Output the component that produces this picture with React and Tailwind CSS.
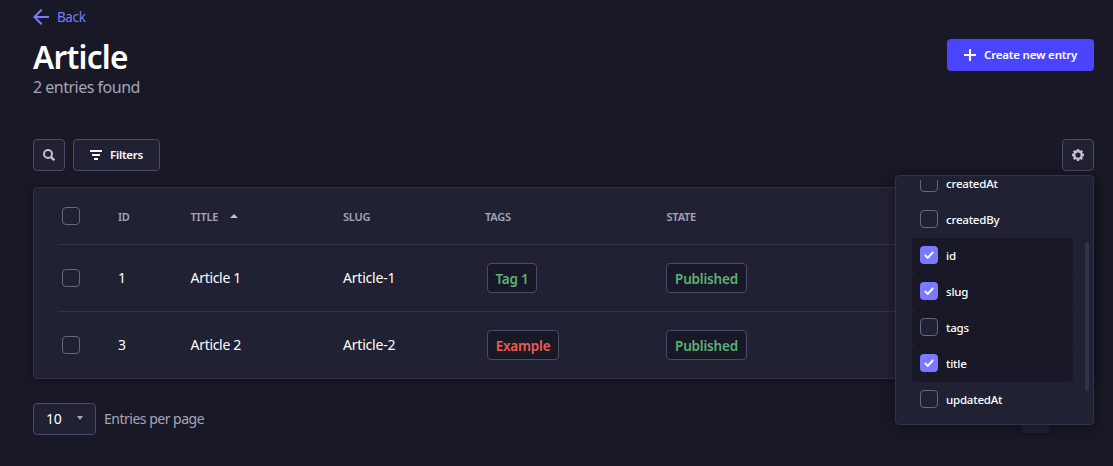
const BORDER = "border-[#32324d]";

function ArrowLeft() {
  return (
    <svg width="16" height="16" viewBox="0 0 24 24" fill="#7b79ff">
      <path d="M24 13.3a.2.2 0 0 1-.2.2H5.74l8.239 8.239a.2.2 0 0 1 0 .282L12.14 23.86a.2.2 0 0 1-.282 0L.14 12.14a.2.2 0 0 1 0-.282L11.86.14a.2.2 0 0 1 .282 0L13.98 1.98a.2.2 0 0 1 0 .282L5.74 10.5H23.8c.11 0 .2.09.2.2v2.6Z" />
    </svg>
  );
}

function Plus() {
  return (
    <svg width="12" height="12" viewBox="0 0 12 12" fill="#fff">
      <path d="M5 0h2v5h5v2H7v5H5V7H0V5h5z" />
    </svg>
  );
}

function Search() {
  return (
    <svg width="12" height="12" viewBox="0 0 12 12" fill="none" stroke="#c0c0cf" strokeWidth="2">
      <circle cx="5" cy="5" r="4" />
      <path d="M7.8 7.8l3.5 3.5" strokeWidth="2.4" />
    </svg>
  );
}

function Filter() {
  return (
    <svg width="12" height="10" viewBox="0 0 12 10" fill="#fff">
      <rect width="12" height="2" rx=".3" />
      <rect x="2" y="4" width="8" height="2" rx=".3" />
      <rect x="4" y="8" width="4" height="2" rx=".3" />
    </svg>
  );
}

function Cog() {
  return (
    <svg width="12" height="12" viewBox="-6 -6 12 12" fill="none" stroke="#c0c0cf">
      <circle r="3.8" strokeWidth="2.5" />
      {[0, 45, 90, 135, 180, 225, 270, 315].map((a) => (
        <path key={a} d="M0 -4.2V-6" strokeWidth="2.3" transform={`rotate(${a})`} />
      ))}
    </svg>
  );
}

function Checkbox({ checked }) {
  if (checked) {
    return (
      <span className="flex size-[18px] shrink-0 items-center justify-center rounded bg-[#7b79ff]">
        <svg width="10" height="8" viewBox="0 0 10 8" fill="none" stroke="#fff" strokeWidth="1.9">
          <path d="M.8 3.8l3 3L9.2 1" />
        </svg>
      </span>
    );
  }
  return <span className="block size-[18px] shrink-0 rounded border border-[#666687] bg-[#212134]" />;
}

function Badge({ color, className, children }) {
  return (
    <span className={`flex h-[30px] items-center justify-center rounded border border-[#4a4a6a] bg-[#181826] pt-0.5 text-[13.5px] leading-5 font-semibold ${color} ${className}`}>
      {children}
    </span>
  );
}

const GRID = "grid grid-cols-[60px_72.5px_152.5px_142px_181.5px_1fr] items-center";
const HEAD = "pt-0.5 text-[11px] font-semibold tracking-[-0.2px] text-[#a5a5ba]";

const rows = [
  { id: "1", title: "Article 1", slug: "Article-1", tag: "Tag 1", tagColor: "text-[#5cb176]", tagWidth: "w-[50px] tracking-[-0.2px]" },
  { id: "3", title: "Article 2", slug: "Article-2", tag: "Example", tagColor: "text-[#ee5e52]", tagWidth: "w-[72px] tracking-[-0.2px]" },
];

const fields = [
  { name: "createdAt" },
  { name: "createdBy" },
  { name: "id", checked: true, active: true },
  { name: "slug", checked: true, active: true },
  { name: "tags", active: true },
  { name: "title", checked: true, active: true },
  { name: "updatedAt" },
];

function FieldsMenu() {
  return (
    <div className={`absolute top-[175px] left-[895px] flex h-[250px] w-[199px] rounded border ${BORDER} bg-[#212134] pt-1 pl-4 shadow-[0_2px_15px_rgba(0,0,0,0.35)]`}>
      <div className="flex h-[238px] w-[161px] flex-col justify-end overflow-hidden">
        {fields.map((f) => (
          <div key={f.name} className={`flex h-9 shrink-0 items-center gap-2 rounded px-2 pb-0.5 ${f.active ? "bg-[#181826]" : ""}`}>
            <Checkbox checked={f.checked} />
            <span className="pt-px text-[11.5px] leading-4 font-medium tracking-[-0.2px] text-white">{f.name}</span>
          </div>
        ))}
      </div>
      <div className="mt-[62px] ml-3 h-[149px] w-1 rounded-sm bg-[#32324d]" />
    </div>
  );
}

export default function App() {
  return (
    <div className="relative h-[466px] w-full overflow-hidden bg-[#181826] pr-[19px] pl-[33px] font-['Noto_Sans','Open_Sans',sans-serif] text-white">
      <div className="flex h-[34px] items-center gap-2">
        <ArrowLeft />
        <span className="text-[13.5px] tracking-[-0.4px] text-[#7b79ff]">Back</span>
      </div>
      <header className="flex h-[105px] items-start justify-between">
        <div className="pt-[3px]">
          <h1 className="text-[31.5px] leading-10 font-semibold tracking-[-0.7px]">Article</h1>
          <p className="-mt-px text-base leading-[22px] tracking-[-0.5px] text-[#a5a5ba]">2 entries found</p>
        </div>
        <button className="mt-[5px] flex h-8 w-[147px] items-center gap-2 rounded bg-[#4945ff] pl-[17px] text-[11.5px] font-semibold tracking-[-0.2px] whitespace-nowrap">
          <Plus />
          Create new entry
        </button>
      </header>
      <div className="flex h-8 gap-2">
        <button className="flex size-8 items-center justify-center rounded border border-[#4a4a6a] bg-[#212134]">
          <Search />
        </button>
        <button className="flex h-8 w-[87px] items-center gap-2 rounded border border-[#4a4a6a] bg-[#212134] pl-4 text-[11.5px] font-semibold tracking-[-0.25px]">
          <Filter />
          Filters
        </button>
        <button className="ml-auto flex size-8 items-center justify-center rounded border border-[#4a4a6a] bg-[#212134]">
          <Cog />
        </button>
      </div>
      <section className={`mt-4 h-[192px] rounded border ${BORDER} bg-[#212134] px-6 shadow-[0_1px_8px_rgba(0,0,0,0.25)]`}>
        <div className={`${GRID} h-14`}>
          <div className="pl-1"><Checkbox /></div>
          <span className={HEAD}>ID</span>
          <span className={`${HEAD} flex items-center gap-3`}>
            TITLE
            <svg className="-mt-0.5" width="8" height="4" viewBox="0 0 8 4" fill="#c0c0cf"><path d="M0 4L4 0l4 4z" /></svg>
          </span>
          <span className={HEAD}>SLUG</span>
          <span className={HEAD}>TAGS</span>
          <span className={HEAD}>STATE</span>
        </div>
        {rows.map((r) => (
          <div key={r.id} className={`${GRID} h-[67px] border-t ${BORDER} text-sm`}>
            <div className="pl-1"><Checkbox /></div>
            <span>{r.id}</span>
            <span className="tracking-[-0.3px]">{r.title}</span>
            <span className="tracking-[-0.2px]">{r.slug}</span>
            <div className="pl-0.5"><Badge color={r.tagColor} className={r.tagWidth}>{r.tag}</Badge></div>
            <Badge color="text-[#5cb176]" className="-ml-[0.5px] w-[81px] tracking-[-0.2px]">Published</Badge>
          </div>
        ))}
      </section>
      <footer className="mt-6 flex items-start">
        <div className="flex h-8 w-[63px] items-center justify-between rounded border border-[#4a4a6a] bg-[#212134] pr-3 pl-3 text-sm tracking-[-0.3px]">
          10
          <svg className="-mt-0.5" width="6" height="4" viewBox="0 0 6 4" fill="#a5a5ba"><path d="M0 0h6L3 4z" /></svg>
        </div>
        <span className="ml-2 text-sm leading-8 tracking-[-0.5px] text-[#a5a5ba]">Entries per page</span>
        <div className="mr-11 ml-auto h-[30px] w-[29px] rounded bg-[#212134] shadow-[0_1px_4px_rgba(0,0,0,0.2)]" />
      </footer>
      <FieldsMenu />
    </div>
  );
}
